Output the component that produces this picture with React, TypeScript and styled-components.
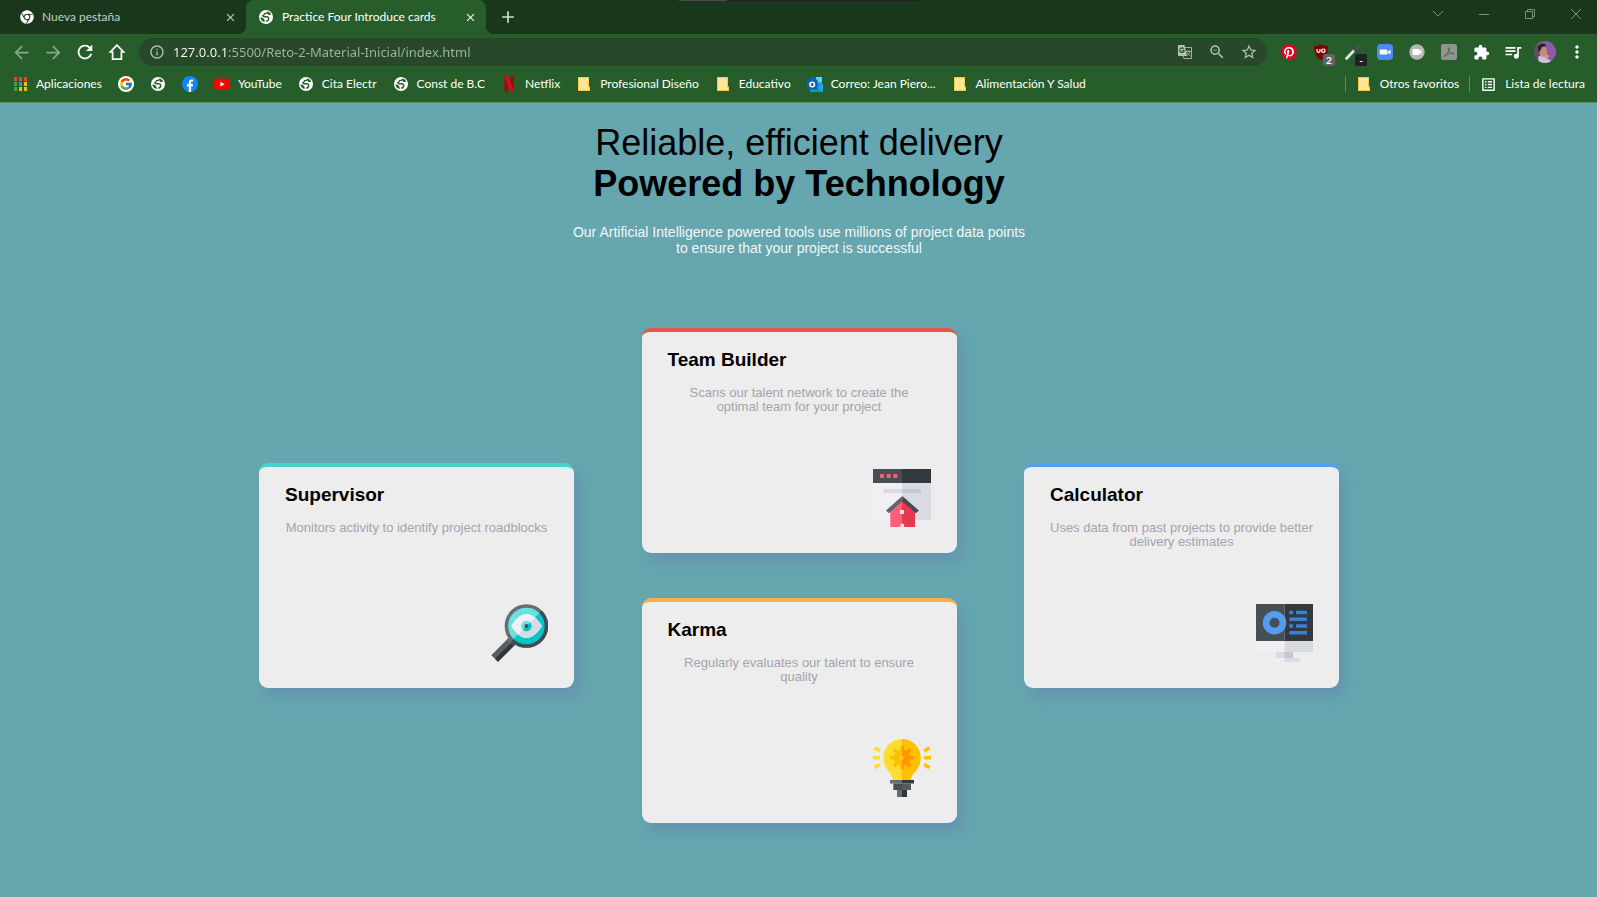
import React from "react";
import styled, { createGlobalStyle, css } from "styled-components";
import {
  MdArrowBack,
  MdArrowForward,
  MdRefresh,
  MdInfoOutline,
  MdZoomOut,
  MdStarBorder,
  MdExtension,
  MdQueueMusic,
  MdMoreVert,
  MdVideocam,
  MdOutlineListAlt,
  MdClose,
  MdAdd,
} from "react-icons/md";
import { FaChrome, FaPinterest } from "react-icons/fa";
import { FcGoogle } from "react-icons/fc";

const color = {
  frame: "#1b371b",
  toolbar: "#275d2b",
  field: "#274829",
  page: "#65a6af",
  card: "#ededed",
};

const GlobalStyle = createGlobalStyle`
  * { box-sizing: border-box; }
  body { margin: 0; background: ${color.page}; }
  h1, h2, p { margin: 0; }
  button { padding: 0; border: 0; background: none; color: inherit; font: inherit; }
  svg { display: block; flex: none; }
`;

const Screen = styled.div`
  min-height: 100vh;
  display: flex;
  flex-direction: column;
`;

/* ---------- browser window ---------- */

const Browser = styled.header`
  position: relative;
  background: ${color.toolbar};
  border-bottom: 1px solid #5a8a5f;
  font-family: Lato, "Open Sans", sans-serif;
  font-size: 12px;
  line-height: 16px;
  color: #fff;
`;

const Notch = styled.div`
  position: absolute;
  top: 0;
  left: 679px;
  width: 241px;
  height: 1px;
  background: #261f26;
  border-left: 48px solid #4d4a4d;
`;

const TabStrip = styled.div`
  display: flex;
  align-items: center;
  height: 34px;
  background: ${color.frame};
`;

const Tab = styled.div<{ $active?: boolean }>`
  position: relative;
  display: flex;
  align-items: center;
  gap: 8px;
  height: 34px;
  width: ${(p) => (p.$active ? 240 : 246)}px;
  padding: 0 8px 0 ${(p) => (p.$active ? 12 : 20)}px;
  ${(p) =>
    p.$active
      ? css`
          background: ${color.toolbar};
          border-radius: 8px 8px 0 0;
          color: #fff;

          &::before,
          &::after {
            content: "";
            position: absolute;
            bottom: 0;
            width: 8px;
            height: 8px;
          }
          &::before {
            left: -8px;
            background: radial-gradient(circle at 0 0, transparent 8px, ${color.toolbar} 8px);
          }
          &::after {
            right: -8px;
            background: radial-gradient(circle at 100% 0, transparent 8px, ${color.toolbar} 8px);
          }
        `
      : css`
          color: #c4cfc4;
        `}
`;

const TabTitle = styled.span`
  flex: 1;
  white-space: nowrap;
`;

const IconButton = styled.button<{ $size?: number; $dim?: boolean }>`
  position: relative;
  display: flex;
  flex: none;
  align-items: center;
  justify-content: center;
  width: ${(p) => p.$size ?? 16}px;
  height: ${(p) => p.$size ?? 16}px;
  opacity: ${(p) => (p.$dim ? 0.45 : 1)};
`;

const WindowControls = styled.div`
  display: flex;
  align-self: flex-start;
  margin-left: auto;
  margin-right: -2px;
`;

const WindowButton = styled.button`
  display: flex;
  align-items: center;
  justify-content: center;
  width: 46px;
  height: 28px;
`;

const Toolbar = styled.div`
  display: flex;
  align-items: center;
  height: 36px;
  padding: 0 12px 0 11px;
`;

const NavGroup = styled.div`
  display: flex;
  gap: 12px;
  margin-right: 12px;
`;

const AddressBar = styled.div`
  flex: 1;
  display: flex;
  align-items: center;
  gap: 8px;
  height: 28px;
  padding: 0 10px;
  border-radius: 14px;
  background: ${color.field};
  color: #b4c1b5;
`;

const AddressInput = styled.input`
  flex: 1;
  min-width: 0;
  height: 20px;
  padding: 0;
  border: 0;
  outline: 0;
  font: 13px/20px "Noto Sans", "Open Sans", sans-serif;
  color: transparent;
  background: linear-gradient(to right, #fff 55px, #a5b4a6 55px);
  background-clip: text;
  -webkit-background-clip: text;
`;

const FieldActions = styled.div`
  display: flex;
  gap: 16px;
`;

const Extensions = styled.div`
  display: flex;
  align-items: center;
  gap: 16px;
  margin-left: 14px;
`;

const Badge = styled.span<{ $dark?: boolean }>`
  position: absolute;
  right: -6px;
  bottom: -6px;
  width: 12px;
  height: 12px;
  border-radius: 2px;
  background: ${(p) => (p.$dark ? "#202124" : "#606266")};
  font-size: 10px;
  font-weight: 700;
  line-height: 12px;
  text-align: center;
`;

const Bookmarks = styled.nav`
  display: flex;
  align-items: center;
  height: 32px;
  padding: 0 12px 4px;
  gap: 16px;
`;

const Bookmark = styled.a`
  display: flex;
  align-items: center;
  gap: 8px;
  color: #fff;
  text-decoration: none;
  white-space: nowrap;
`;

const BookmarkEnd = styled.div`
  display: flex;
  align-items: center;
  gap: 10px;
  margin-left: auto;
`;

const Divider = styled.span`
  width: 1px;
  height: 16px;
  background: #5a8a5f;
`;

/* ---------- icons ---------- */

const Globe = () => (
  <svg width="16" height="16" viewBox="0 0 16 16">
    <circle cx="8" cy="8" r="7" fill="#fff" />
    <path
      d="M9.200 3.400C8.800 4.400 8 4.500 6.600 4.600c-.2 1.200-.8 1.700-1.800 2 .2 1 .6 1.200 1.500 1.200h2.200c1.500 0 2.200.8 2.200 2-.2 1.400-1 2.200-2.500 2.200"
      fill="none"
      stroke={color.toolbar}
      strokeWidth="1.400"
    />
    <path d="M2.400 8.600c1.600 0 2.600.4 3.500 1.400.7.800.8 1.600.8 3.100-2.400-.5-4-2.100-4.300-4.500z" fill={color.toolbar} />
    <path d="M9 2.600c2 .2 3.600 1.300 4.200 3-1.200.5-2.300.5-3.300-.2-.8-.7-.7-1.900-.9-2.800z" fill={color.toolbar} />
  </svg>
);

const TranslateMark = () => (
  <svg width="16" height="16" viewBox="0 0 16 16" fill="none">
    <path d="M8 3.500h6.500v11H7l-1.500-3" stroke="#a3b0a4" />
    <path d="M9 7.500h5M11.500 6v1.500M13 7.500c-.5 2-2 3.500-3.500 4.300M10 8.500c.6 1.400 1.800 2.600 3.300 3.300" stroke="#a3b0a4" />
    <path d="M1 1h6.500L10 12H2a1 1 0 0 1-1-1z" fill="#b4c1b5" />
    <path d="M6.800 4.800A2.200 2.200 0 1 0 7 7.200V6.500H5.200" stroke={color.field} strokeWidth="1.200" />
  </svg>
);

const HomeMark = () => (
  <svg width="20" height="20" viewBox="0 0 20 20" fill="none" stroke="#fff" strokeWidth="1.700">
    <path d="M10 3.200 3.400 10h2.200v7.200h8.800V10h2.200z" />
  </svg>
);

const AppsGrid = () => {
  const fills = ["#ea4335", "#ea4335", "#ea4335", "#34a853", "#4285f4", "#fbbc04", "#34a853", "#fbbc04", "#fbbc04"];
  return (
    <svg width="16" height="16" viewBox="0 0 16 16">
      {fills.map((f, i) => (
        <rect key={i} x={2 + (i % 3) * 5} y={1 + Math.floor(i / 3) * 5} width="3" height="4" fill={f} />
      ))}
    </svg>
  );
};

const GoogleMark = () => (
  <svg width="16" height="16" viewBox="0 0 16 16">
    <circle cx="8" cy="8" r="8" fill="#fff" />
    <FcGoogle x="1" y="1" size={14} />
  </svg>
);

const FacebookMark = () => (
  <svg width="16" height="16" viewBox="0 0 16 16">
    <circle cx="8" cy="8" r="8" fill="#1086f5" />
    <path d="M6.800 16v-5.600H4.900V8h1.900V6.400c0-2 1.100-3 2.900-3l1.500.1v2h-1c-.9 0-1.100.5-1.100 1.200V8h2l-.4 2.400H9.100V16z" fill="#fff" />
  </svg>
);

const YoutubeMark = () => (
  <svg width="16" height="16" viewBox="0 0 16 16">
    <rect y="2.500" width="16" height="11.500" rx="3" fill="#f00" />
    <path d="m6.400 5.800 4.200 2.400-4.200 2.400z" fill="#fff" />
  </svg>
);

const NetflixMark = () => (
  <svg width="16" height="16" viewBox="0 0 16 16">
    <path d="M3.500 0H7v15.600l-3.500.4zM9.500 0H13v16l-3.500-.4z" fill="#a3070f" />
    <path d="M3.500 0H7l6 16-3.500-.4z" fill="#e50914" />
  </svg>
);

const FolderMark = () => (
  <svg width="16" height="16" viewBox="0 0 16 16">
    <path d="M2 1h11v9.500h1V15H2z" fill="#f3c94b" />
    <path d="M3 2h9v12H3z" fill="#ffe694" />
    <path d="M11.500 11.500H13V14h-1.500z" fill="#ffe694" />
  </svg>
);

const OutlookMark = () => (
  <svg width="16" height="16" viewBox="0 0 16 16">
    <path d="M3 1h12v7H3z" fill="#28a8ea" />
    <path d="M9 1h6v5H9z" fill="#50d9ff" />
    <path d="M3 1h6v5H3z" fill="#0a67b5" />
    <path d="m3 7 13 1v8H3z" fill="#1490df" />
    <path d="m10 11.500 6-3.500v8z" fill="#28a8ea" />
    <rect y="3.500" width="10.500" height="10" rx="1" fill="#0f5eb4" />
    <circle cx="5.200" cy="8.500" r="2.300" fill="none" stroke="#fff" strokeWidth="1.500" />
  </svg>
);

const PinterestMark = () => (
  <svg width="16" height="16" viewBox="0 0 16 16">
    <circle cx="8" cy="8" r="7" fill="#fff" />
    <FaPinterest size={16} color="#e60023" />
  </svg>
);

const UblockMark = () => (
  <svg width="16" height="16" viewBox="0 0 16 16">
    <path d="M8 0c2 1.600 4 2 7 2 0 7-1.200 10.500-7 14C2.200 12.500 1 9 1 2c3 0 5-.4 7-2z" fill="#800000" />
    <path d="M4 5v2.200c0 1.600 3 1.600 3 0V5" fill="none" stroke="#fff" strokeWidth="1.200" />
    <circle cx="10.400" cy="6.700" r="1.700" fill="none" stroke="#fff" strokeWidth="1.200" />
  </svg>
);

const DropperMark = () => (
  <svg width="16" height="16" viewBox="0 0 16 16">
    <path d="m1.500 14.500 7.500-8" stroke="#e8e8e8" strokeWidth="2.600" strokeLinecap="round" />
    <path d="m8.500 3.500 4 4" stroke="#3c3c3c" strokeWidth="2" />
    <path d="m10.500 5.500 3-3" stroke="#4d4d4d" strokeWidth="4" strokeLinecap="round" />
  </svg>
);

const AcrobatMark = () => (
  <svg width="16" height="16" viewBox="0 0 16 16">
    <rect width="16" height="16" rx="2" fill="#8f9490" />
    <path
      d="M3.500 12.500c2.500-1.500 5-6 4.800-8.500-.8-1.200-1.500.5-.6 2.200 1 2 2.400 3.600 4.500 4 1.200 0 .8-1.300-.8-1.200-2.400.1-5 .9-7.400 2.300-.9.800-.9 1.400-.5 1.200z"
      fill="none"
      stroke="#4a6a4f"
      strokeWidth="1"
    />
  </svg>
);

const ZoomMark = () => (
  <svg width="16" height="16" viewBox="0 0 16 16">
    <rect width="16" height="16" rx="4" fill="#4a8cf7" />
    <path d="M3 5.500h6A1.500 1.500 0 0 1 10.500 7v3.500H4A1.500 1.500 0 0 1 2.500 9zM11 7.400l2.500-1.600v4.600L11 8.800z" fill="#fff" />
  </svg>
);

const MeetMark = () => (
  <svg width="16" height="16" viewBox="0 0 16 16">
    <circle cx="8" cy="8" r="7.700" fill="#b5b5b5" />
    <MdVideocam x="2" y="2" size={12} color="#fff" />
  </svg>
);

const Avatar = () => (
  <svg width="22" height="22" viewBox="0 0 22 22">
    <clipPath id="avatar">
      <circle cx="11" cy="11" r="11" />
    </clipPath>
    <g clipPath="url(#avatar)">
      <rect width="22" height="22" fill="#8d5aa8" />
      <path d="M0 4h5l2 9-3 9H0z" fill="#5f4d63" />
      <path d="M5 22 4 16l5-3 3 4 4 2 1 3z" fill="#cfc3d8" />
      <path d="M5 6c2-3 6-2 7 1l1 4-1 4-4 1-3-4z" fill="#c48b78" />
      <path d="M4 7c0-5 7-6 8.500-2L8 6l-1.500 3L5 12z" fill="#2d1f26" />
      <path d="m10 16 3-3 2 2-2 4z" fill="#d39a85" />
    </g>
  </svg>
);

const TeamIcon = () => (
  <svg width="58" height="58" viewBox="0 0 58 58">
    <path d="M0 0h29v14H0z" fill="#474f54" />
    <path d="M29 0h29v14H29z" fill="#32393f" />
    <path d="M7 5h4v4H7zM13.700 5h4v4h-4zM20.300 5h4v4h-4z" fill="#ff5d78" />
    <path d="M0 14h29v37H0z" fill="#efeff4" />
    <path d="M29 14h29v37H29z" fill="#dadae3" />
    <path d="M10.500 20H29v4H10.500z" fill="#dadae3" />
    <path d="M29 20h19v4H29z" fill="#c8c8d1" />
    <path d="M17.300 41 29 30.500V58H17.300z" fill="#ff5d78" />
    <path d="M29 30.500 42 41v17H29z" fill="#e8374f" />
    <path d="M29.300 27v5.200L15.800 44.200 13 41.500z" fill="#5d666b" />
    <path d="M29.300 27v5.200l13.700 12 2.800-2.700z" fill="#434a50" />
    <path d="M27 41h4v4h-4zM27.400 58v-1.500a1.900 1.900 0 0 1 3.800 0V58z" fill="#e4e4ec" />
  </svg>
);

const SupervisorIcon = () => (
  <svg width="58" height="58" viewBox="0 0 58 58">
    <clipPath id="lensShade">
      <path d="M9 49.500 64-5.500V60H9z" />
    </clipPath>
    <path d="M18 34.500 1.300 51.200l3.400 3.300 16.500-16.500z" fill="#565d63" />
    <path d="M24.700 41.200 8 57.900l-3.400-3.400L21.200 38z" fill="#32373b" />
    <path d="m16.500 36 4-4 3.700 3.500-4.200 4.200z" fill="#666e73" />
    <path d="m20 39.700 4.500-4.300 3.200 3-4.200 4.200z" fill="#434a52" />
    <circle cx="36.400" cy="22" r="20" fill="#68e1df" stroke="#666e73" strokeWidth="3.500" />
    <g clipPath="url(#lensShade)">
      <circle cx="36.400" cy="22" r="20" fill="#00c8c8" stroke="#434a52" strokeWidth="3.500" />
    </g>
    <path d="M21 22c5-8 10-12 15.500-12S47 14 52 22c-5 8-10 12-15.500 12S26 30 21 22z" fill="#f0f0f6" />
    <path
      d="M21 22c5-8 10-12 15.500-12S47 14 52 22c-5 8-10 12-15.500 12S26 30 21 22z"
      fill="#dadae5"
      clipPath="url(#lensShade)"
    />
    <circle cx="36.400" cy="22" r="5.200" fill="#68e1df" />
    <circle cx="36.400" cy="22" r="5.200" fill="#00c8c8" clipPath="url(#lensShade)" />
    <circle cx="36.400" cy="22" r="1.900" fill="#434a52" />
  </svg>
);

const CalculatorIcon = () => (
  <svg width="58" height="58" viewBox="0 0 58 58">
    <path d="M1 0h28.500v37H1z" fill="#474f54" />
    <path d="M29.500 0H58v37H29.500z" fill="#32393f" />
    <circle cx="19.500" cy="18.700" r="8.400" fill="none" stroke="#559cef" strokeWidth="6.700" />
    <path
      d="M34.300 6.700H38v3.500h-3.700zM41 6.700h11v3.500H41zM34.300 13.500H52V17H34.300zM34.300 20.300H38v3.500h-3.700zM41 20.300h11v3.500H41zM34.300 27H52v3.500H34.300z"
      fill="#3b80d6"
    />
    <path d="M1 37h28.500v11H1zM15 54h14.500v4H15z" fill="#efeff4" />
    <path d="M29.500 37H58v11H29.500zM29.500 54h15v4h-15zM21 48h8.500v6H21z" fill="#dadae3" />
    <path d="M29.500 48H38v6h-8.500z" fill="#c8c8d3" />
  </svg>
);

const KarmaIcon = () => (
  <svg width="58" height="58" viewBox="0 0 58 58">
    <path d="M29 0v41h-9c0-7-9.700-10-9.700-22A18.800 18.800 0 0 1 29 0z" fill="#ffdc2e" />
    <path d="M29 0v41h9c0-7 9.800-10 9.800-22A18.800 18.800 0 0 0 29 0z" fill="#ffc000" />
    <g stroke="#ffc000" strokeWidth="3.400">
      <circle cx="29" cy="18.700" r="5.200" fill="none" strokeWidth="6" />
      <path d="M29 7v5M29 25.500v5M17 18.700h5M20.700 10.400l4 4M20.700 27l4-4" />
    </g>
    <clipPath id="gearShade">
      <path d="M29 0h29v58H29z" />
    </clipPath>
    <g stroke="#ff9500" strokeWidth="3.400" clipPath="url(#gearShade)">
      <circle cx="29" cy="18.700" r="5.200" fill="none" strokeWidth="6" />
      <path d="M29 7v5M29 25.500v5M36 18.700h5M37.300 10.400l-4 4M37.300 27l-4-4" />
    </g>
    <path d="M17 41h12v3.500H17zM24 51h5v7h-5z" fill="#666e73" />
    <path d="M29 41h12v3.500H29zM29 51h5v7h-5z" fill="#32373b" />
    <path d="M20.300 44.500H29V51h-8.700z" fill="#474f54" />
    <path d="M29 44.500h9V51h-9z" fill="#565a60" />
    <path d="M0 18.700h7M1.500 8.800l5.300 3.200M1.500 28.600l5.300-3.200" stroke="#ffdc2e" strokeWidth="3.600" />
    <path d="M51 18.700h7M56.500 8.800 51.200 12M56.500 28.600l-5.300-3.200" stroke="#ffc000" strokeWidth="3.600" />
  </svg>
);

/* ---------- page ---------- */

const Page = styled.main`
  flex: 1;
  display: flex;
  flex-direction: column;
  align-items: center;
  padding: 19px 24px 72px 25px;
  background: ${color.page};
  font-family: "Liberation Sans", Arial, sans-serif;
`;

const Title = styled.h1`
  font-size: 36px;
  line-height: 41px;
  font-weight: 700;
  text-align: center;
  color: #000;
`;

const TitleLight = styled.span`
  display: block;
  font-weight: 400;
`;

const Intro = styled.p`
  max-width: 464px;
  margin-top: 20px;
  font-size: 14px;
  line-height: 16px;
  text-align: center;
  color: #f4f7f7;
`;

const CardGrid = styled.section`
  display: flex;
  align-items: center;
  justify-content: space-between;
  width: 100%;
  max-width: 1080px;
  margin-top: 72px;
`;

const CardColumn = styled.div`
  display: flex;
  flex-direction: column;
  gap: 45px;
`;

const Card = styled.article<{ $accent: string }>`
  display: flex;
  flex-direction: column;
  width: 315px;
  height: 225px;
  padding: 17px 26px 26px;
  border-top: 4px solid ${(p) => p.$accent};
  border-radius: 9px;
  background: ${color.card};
  box-shadow: 6px 9px 12px rgba(100, 125, 175, 0.4);
`;

const CardTitle = styled.h2`
  font-size: 19px;
  line-height: 22px;
  color: #000;
`;

const CardText = styled.p`
  margin-top: 15px;
  font-size: 13px;
  line-height: 14px;
  text-align: center;
  color: #a3a4ad;
`;

const CardArt = styled.div`
  margin-top: auto;
  margin-left: auto;
`;

type CardData = { title: string; text: string; accent: string; art: React.ReactNode };

const columns: CardData[][] = [
  [
    {
      title: "Supervisor",
      text: "Monitors activity to identify project roadblocks",
      accent: "#44d3d2",
      art: <SupervisorIcon />,
    },
  ],
  [
    {
      title: "Team Builder",
      text: "Scans our talent network to create the optimal team for your project",
      accent: "#ea5454",
      art: <TeamIcon />,
    },
    {
      title: "Karma",
      text: "Regularly evaluates our talent to ensure quality",
      accent: "#fcae4a",
      art: <KarmaIcon />,
    },
  ],
  [
    {
      title: "Calculator",
      text: "Uses data from past projects to provide better delivery estimates",
      accent: "#549ef2",
      art: <CalculatorIcon />,
    },
  ],
];

const bookmarks: { icon: React.ReactNode; label?: string; name?: string }[] = [
  { icon: <AppsGrid />, label: "Aplicaciones" },
  { icon: <GoogleMark />, name: "Google" },
  { icon: <Globe />, name: "Web" },
  { icon: <FacebookMark />, name: "Facebook" },
  { icon: <YoutubeMark />, label: "YouTube" },
  { icon: <Globe />, label: "Cita Electr" },
  { icon: <Globe />, label: "Const de B.C" },
  { icon: <NetflixMark />, label: "Netflix" },
  { icon: <FolderMark />, label: "Profesional Diseño" },
  { icon: <FolderMark />, label: "Educativo" },
  { icon: <OutlookMark />, label: "Correo: Jean Piero..." },
  { icon: <FolderMark />, label: "Alimentación Y Salud" },
];

export default function App() {
  return (
    <Screen>
      <GlobalStyle />
      <Browser>
        <TabStrip>
          <Tab>
            <FaChrome size={14} color="#fff" />
            <TabTitle>Nueva pestaña</TabTitle>
            <IconButton aria-label="Cerrar pestaña">
              <MdClose size={13} />
            </IconButton>
          </Tab>
          <Tab $active>
            <Globe />
            <TabTitle>Practice Four Introduce cards</TabTitle>
            <IconButton aria-label="Cerrar pestaña">
              <MdClose size={13} />
            </IconButton>
          </Tab>
          <IconButton $size={44} aria-label="Pestaña nueva">
            <MdAdd size={20} color="#d5ddd5" />
          </IconButton>
          <WindowControls>
            <WindowButton aria-label="Buscar pestañas">
              <svg width="12" height="12" fill="none" stroke="#7d907d">
                <path d="m1 3 5 5 5-5" />
              </svg>
            </WindowButton>
            <WindowButton aria-label="Minimizar">
              <svg width="12" height="12" fill="none" stroke="#7d907d">
                <path d="M1 6.500h10" />
              </svg>
            </WindowButton>
            <WindowButton aria-label="Restaurar">
              <svg width="12" height="12" fill="none" stroke="#7d907d">
                <path d="M1.500 3.500h7v7h-7zM3.500 3.500v-2h7v7h-2" />
              </svg>
            </WindowButton>
            <WindowButton aria-label="Cerrar">
              <svg width="12" height="12" fill="none" stroke="#7d907d">
                <path d="m1 1 10 10M11 1 1 11" />
              </svg>
            </WindowButton>
          </WindowControls>
        </TabStrip>

        <Toolbar>
          <NavGroup>
            <IconButton $size={20} $dim aria-label="Atrás">
              <MdArrowBack size={21} />
            </IconButton>
            <IconButton $size={20} $dim aria-label="Adelante">
              <MdArrowForward size={21} />
            </IconButton>
            <IconButton $size={20} aria-label="Recargar">
              <MdRefresh size={22} />
            </IconButton>
            <IconButton $size={20} aria-label="Inicio">
              <HomeMark />
            </IconButton>
          </NavGroup>
          <AddressBar>
            <MdInfoOutline size={16} />
            <AddressInput
              aria-label="Dirección"
              defaultValue="127.0.0.1:5500/Reto-2-Material-Inicial/index.html"
            />
            <FieldActions>
              <IconButton aria-label="Traducir">
                <TranslateMark />
              </IconButton>
              <IconButton aria-label="Zoom">
                <MdZoomOut size={18} />
              </IconButton>
              <IconButton aria-label="Añadir a favoritos">
                <MdStarBorder size={18} />
              </IconButton>
            </FieldActions>
          </AddressBar>
          <Extensions>
            <IconButton aria-label="Pinterest">
              <PinterestMark />
            </IconButton>
            <IconButton aria-label="Bloqueador">
              <UblockMark />
              <Badge>2</Badge>
            </IconButton>
            <IconButton aria-label="Cuentagotas">
              <DropperMark />
              <Badge $dark>-</Badge>
            </IconButton>
            <IconButton aria-label="Zoom">
              <ZoomMark />
            </IconButton>
            <IconButton aria-label="Videollamada">
              <MeetMark />
            </IconButton>
            <IconButton aria-label="Acrobat">
              <AcrobatMark />
            </IconButton>
            <IconButton aria-label="Extensiones">
              <MdExtension size={17} />
            </IconButton>
            <IconButton aria-label="Control multimedia">
              <MdQueueMusic size={20} />
            </IconButton>
            <IconButton aria-label="Perfil">
              <Avatar />
            </IconButton>
            <IconButton aria-label="Menú">
              <MdMoreVert size={20} />
            </IconButton>
          </Extensions>
        </Toolbar>

        <Bookmarks aria-label="Favoritos">
          {bookmarks.map((b, i) => (
            <Bookmark key={i} href="#" aria-label={b.name}>
              {b.icon}
              {b.label}
            </Bookmark>
          ))}
          <BookmarkEnd>
            <Divider />
            <Bookmark href="#">
              <FolderMark />
              Otros favoritos
            </Bookmark>
            <Divider />
            <Bookmark href="#">
              <MdOutlineListAlt size={17} />
              Lista de lectura
            </Bookmark>
          </BookmarkEnd>
        </Bookmarks>
        <Notch />
      </Browser>

      <Page>
        <Title>
          <TitleLight>Reliable, efficient delivery</TitleLight>
          Powered by Technology
        </Title>
        <Intro>
          Our Artificial Intelligence powered tools use millions of project data points to ensure that your project is
          successful
        </Intro>
        <CardGrid>
          {columns.map((cards, i) => (
            <CardColumn key={i}>
              {cards.map((c) => (
                <Card key={c.title} $accent={c.accent}>
                  <CardTitle>{c.title}</CardTitle>
                  <CardText>{c.text}</CardText>
                  <CardArt>{c.art}</CardArt>
                </Card>
              ))}
            </CardColumn>
          ))}
        </CardGrid>
      </Page>
    </Screen>
  );
}
